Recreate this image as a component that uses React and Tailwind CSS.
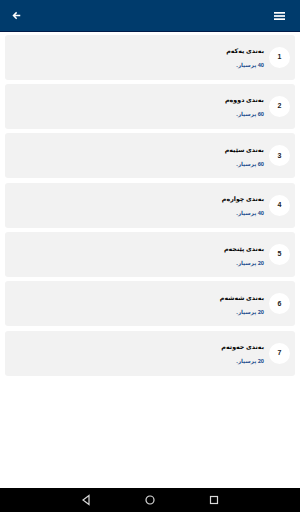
import React from "react";

const items = [
  ["بەندی یەکەم", "40"],
  ["بەندی دووەم", "60"],
  ["بەندی سێیەم", "60"],
  ["بەندی چوارەم", "40"],
  ["بەندی پێنجەم", "20"],
  ["بەندی شەشەم", "20"],
  ["بەندی حەوتەم", "20"],
];

export default function App() {
  return (
    <div className="w-[300px] h-[512px] bg-white flex flex-col overflow-hidden" style={{ fontFamily: '"Noto Sans", "DejaVu Sans", sans-serif' }}>
      <div className="h-[32px] bg-[#003b6c] border-b border-[#001a48] flex items-center justify-between pl-[12px] pr-[15px] shrink-0">
        <svg width="9" height="9" viewBox="0 0 24 24" fill="none" stroke="white" strokeWidth="4" strokeLinecap="square">
          <path d="M20 12H5M11 5l-7 7 7 7" />
        </svg>
        <svg width="11" height="8" viewBox="0 0 11 8" fill="white">
          <rect x="0" y="0" width="11" height="1.7" />
          <rect x="0" y="3.15" width="11" height="1.7" />
          <rect x="0" y="6.3" width="11" height="1.7" />
        </svg>
      </div>
      <div className="flex-1 flex flex-col gap-[4.4px] px-[5px] pt-[2.5px]">
        {items.map(([t, n], i) => (
          <div key={i} className="h-[45px] bg-[#f2f2f2] rounded-[3px] flex items-center justify-end pr-[5px] gap-[5px]">
            <div dir="rtl" className="flex flex-col items-start gap-[6px] mt-[1px]">
              <div className="text-[6.3px] leading-[9px] font-bold text-black">{t}</div>
              <div className="text-[5.5px] leading-[8px] font-bold text-[#1d4f8f]">{n} پرسیار.</div>
            </div>
            <div className="w-[21px] h-[21px] rounded-full bg-white flex items-center justify-center text-[7px] font-bold text-[#222]" style={{ fontFamily: '"Liberation Sans", sans-serif' }}>
              {i + 1}
            </div>
          </div>
        ))}
      </div>
      <div className="h-[24px] bg-black flex items-center justify-center gap-[52px] shrink-0">
        <svg width="12" height="12" viewBox="0 0 12 12" fill="none" stroke="#d8d8d8" strokeWidth="1.2">
          <path d="M9 1.5 L3 6 L9 10.5 Z" />
        </svg>
        <svg width="12" height="12" viewBox="0 0 12 12" fill="none" stroke="#d8d8d8" strokeWidth="1.2">
          <circle cx="6" cy="6" r="4" />
        </svg>
        <svg width="12" height="12" viewBox="0 0 12 12" fill="none" stroke="#d8d8d8" strokeWidth="1.2">
          <rect x="2.5" y="2.5" width="7" height="7" />
        </svg>
      </div>
    </div>
  );
}
